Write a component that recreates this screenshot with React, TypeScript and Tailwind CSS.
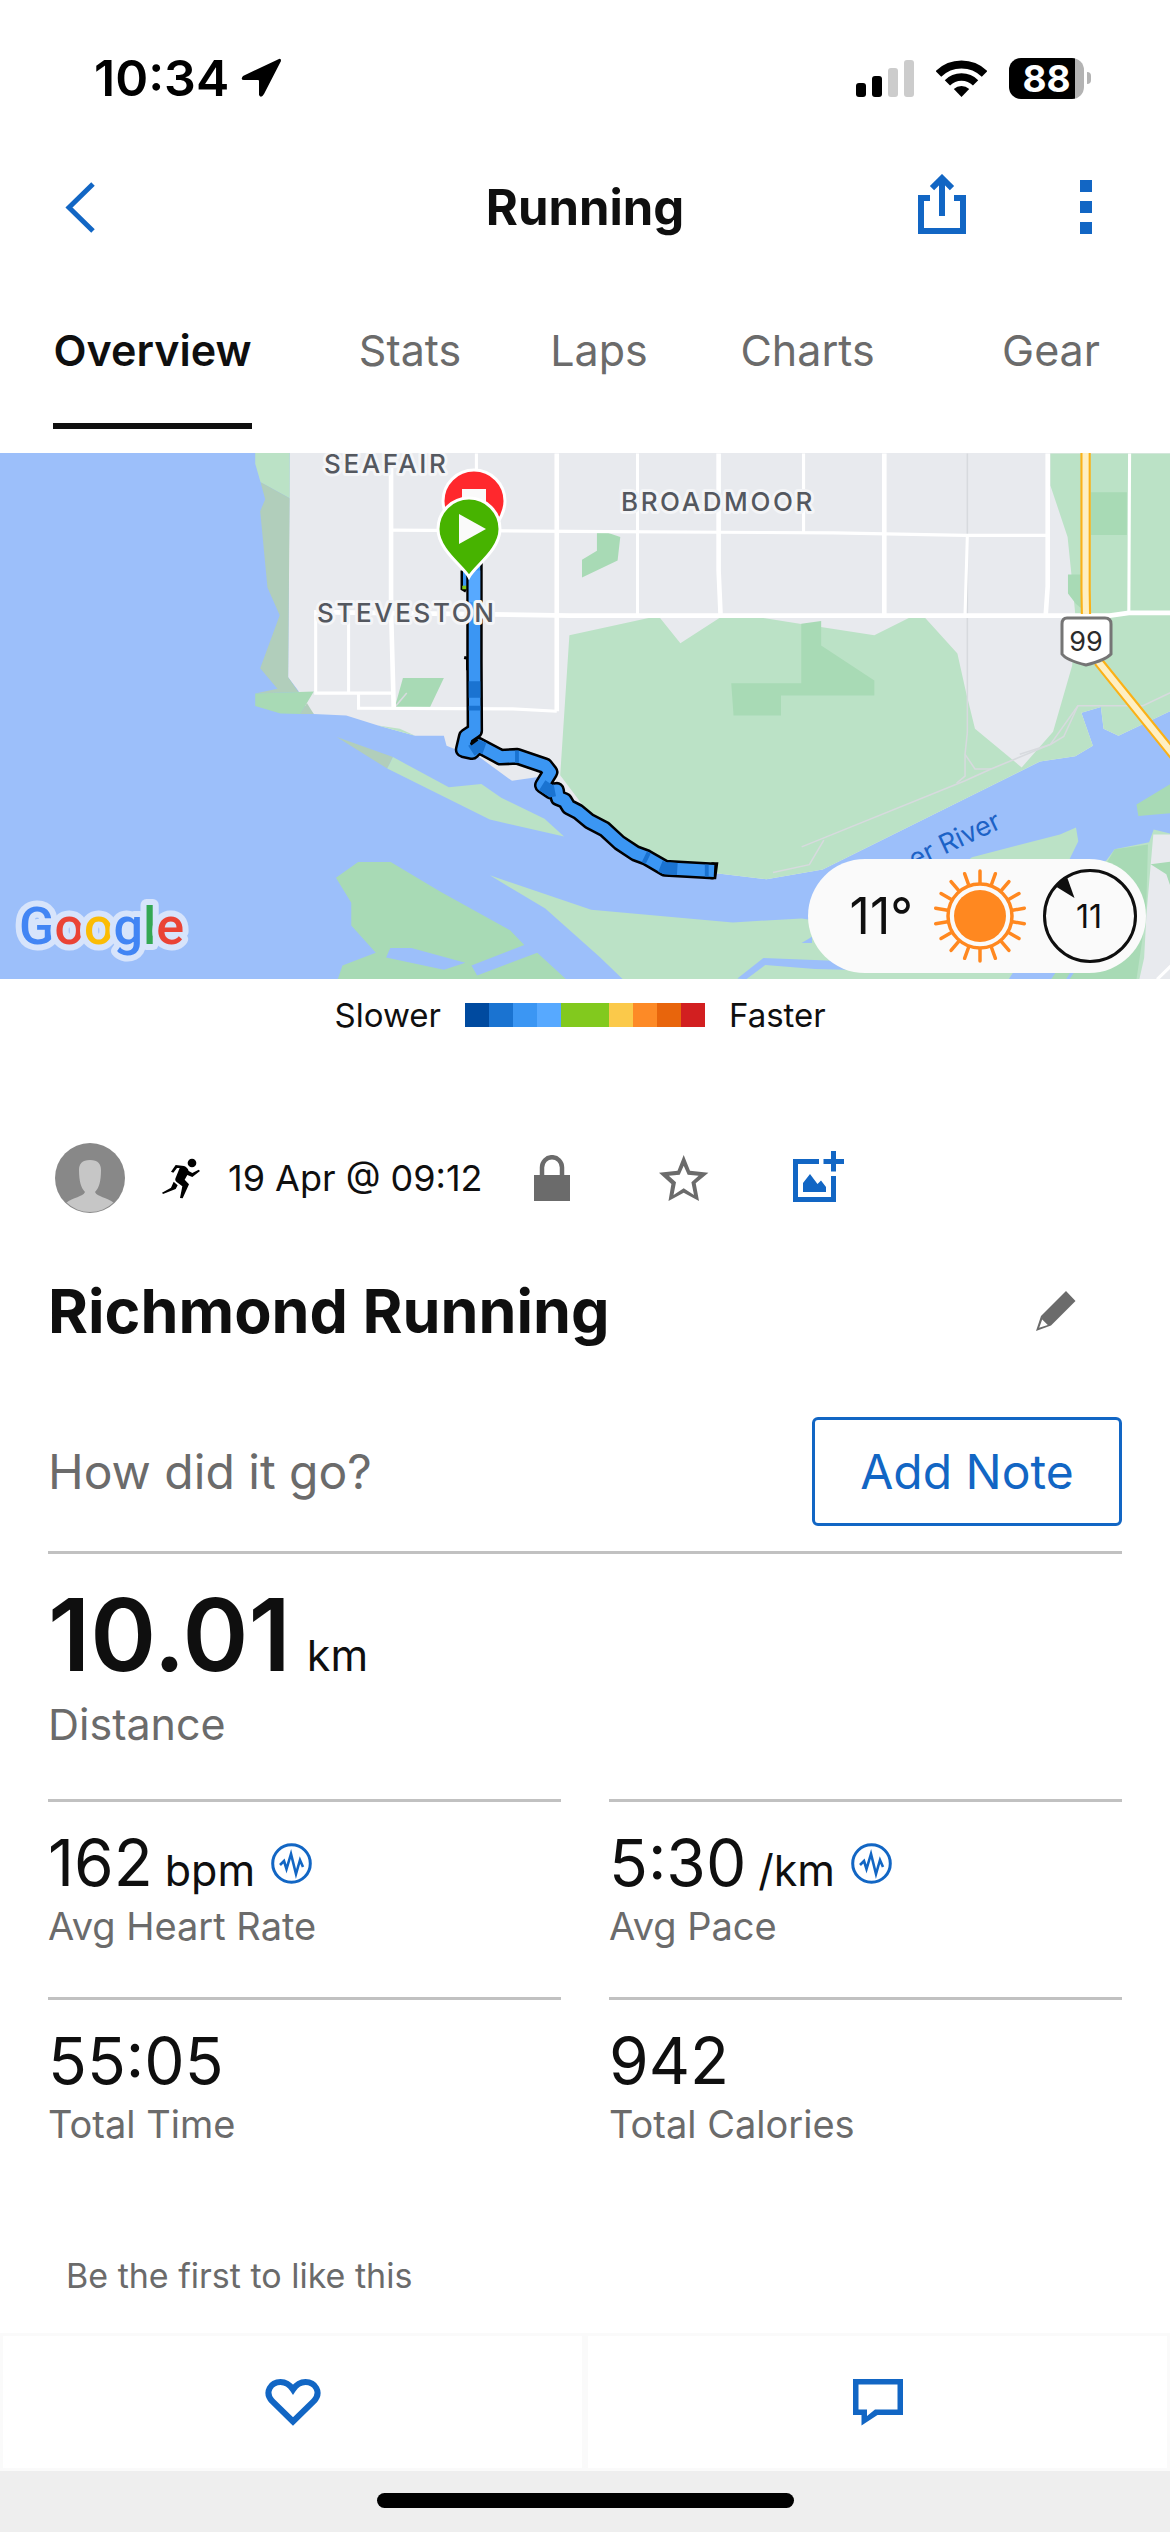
import React from "react";

type Stat = {
  value: string;
  unit?: string;
  label: string;
};

const tabs = ["Overview", "Stats", "Laps", "Charts", "Gear"];

const stats: Stat[] = [
  { value: "162", unit: "bpm", label: "Avg Heart Rate" },
  { value: "5:30", unit: "/km", label: "Avg Pace" },
  { value: "55:05", label: "Total Time" },
  { value: "942", label: "Total Calories" },
];

const paceColors = [
  "bg-[#004a9f]",
  "bg-[#1a73d1]",
  "bg-[#3b96f3]",
  "bg-[#57a9ff]",
  "bg-[#82c91e]",
  "bg-[#82c91e]",
  "bg-[#fbc94a]",
  "bg-[#fd8a26]",
  "bg-[#e8650c]",
  "bg-[#d21f20]",
];

const routePath =
  "M1240 310 V560 L1241 735 L1218 750 L1210 783 L1234 788 L1250 772 L1308 802 L1352 800 L1425 824 L1438 840 L1417 873 L1440 888 L1455 886 L1458 905 L1476 912 L1486 928 L1510 940 L1540 964 L1580 984 L1618 1018 L1660 1045 L1690 1056 L1738 1083 L1866 1090";

const StatusBar = () => (
  <div className="flex h-[156px] items-center justify-between pr-[79px] pl-[94px]">
    <div className="flex items-center gap-3">
      <span className="text-[50px] leading-none font-semibold text-black">10:34</span>
      <svg width="41" height="40" viewBox="0 0 41 40">
        <path d="M38 1 L2 18 Q-1 22 3 22 H17 Q18 22 18 23 V37 Q20 41 23 36 L40 3 Q40 0 38 1Z" />
      </svg>
    </div>
    <div className="flex items-center gap-[22px]">
      <svg width="58" height="37" viewBox="0 0 58 37">
        <rect x="0" y="23" width="10" height="14" rx="3" />
        <rect x="16" y="16" width="10" height="21" rx="3" />
        <rect x="32" y="8" width="10" height="29" rx="3" fill="#cccccc" />
        <rect x="48" y="0" width="10" height="37" rx="3" fill="#cccccc" />
      </svg>
      <svg width="51" height="37" viewBox="0 0 51 37">
        <path d="M2.4 13.9 A33 33 0 0 1 48.6 13.9" fill="none" stroke="#000" strokeWidth="8" />
        <path d="M11.4 22.9 A20 20 0 0 1 39.6 22.9" fill="none" stroke="#000" strokeWidth="7.5" />
        <path d="M25.5 37 L17.8 29 A11.5 11.5 0 0 1 33.2 29Z" />
      </svg>
      <div className="flex items-center gap-[3px]">
        <div className="flex h-[41px] w-[75px] items-center justify-center rounded-[12px] bg-linear-to-r from-black from-88% to-[#b3b3b3] to-88%">
          <span className="text-[37px] leading-none font-bold text-white">88</span>
        </div>
        <div className="h-3 w-1 rounded-r-full bg-[#b3b3b3]" />
      </div>
    </div>
  </div>
);

const Header = () => (
  <header className="grid h-[102px] grid-cols-3 items-center px-16">
    <button aria-label="Back" className="justify-self-start">
      <svg width="32" height="51" viewBox="0 0 32 51" fill="none" stroke="#1266c4" strokeWidth="5">
        <path d="M29 2 L5 25.5 L29 49" />
      </svg>
    </button>
    <h1 className="text-center text-[49px] leading-none font-bold">Running</h1>
    <div className="flex items-center justify-end gap-[114px] pr-3.5">
      <button aria-label="Share" className="pb-1.5">
        <svg width="48" height="60" viewBox="0 0 48 60" fill="none" stroke="#1266c4" strokeWidth="6">
          <path d="M24 42 V5 M14 14.2 L24 4.2 L34 14.2" />
          <path d="M12 24 H3 V57 H45 V24 H36" />
        </svg>
      </button>
      <button aria-label="More options" className="flex flex-col gap-[9px]">
        <span className="size-3 bg-[#1266c4]" />
        <span className="size-3 bg-[#1266c4]" />
        <span className="size-3 bg-[#1266c4]" />
      </button>
    </div>
  </header>
);

const Tabs = () => (
  <nav className="mb-6 grid grid-cols-[305fr_210fr_168fr_249fr_238fr] justify-items-center">
    {tabs.map((tab, index) => (
      <button
        key={tab}
        className={
          index === 0
            ? "h-[171px] border-b-6 border-[#0f0f0f] pt-5 text-[43px] font-semibold"
            : "h-[171px] border-b-6 border-transparent pt-5 text-[43px] text-[#6b6b6b]"
        }
      >
        {tab}
      </button>
    ))}
  </nav>
);

const Weather = () => (
  <div className="absolute right-6 bottom-1.5 flex h-[114px] items-center rounded-full bg-[#fafafa] pr-[9px] pl-[42px]">
    <span className="text-[50px] leading-none">11°</span>
    <svg className="ml-5" width="94" height="94" viewBox="-47 -47 94 94">
      <circle r="26" fill="#ff8820" />
      <g stroke="#ff8820" strokeWidth="3.5" strokeLinecap="round" fill="none">
        <circle r="32" />
        {Array.from({ length: 18 }, (_, i) => (
          <path key={i} d="M0 -33 V-45" transform={`rotate(${i * 20})`} />
        ))}
      </g>
    </svg>
    <svg className="ml-4" width="94" height="94" viewBox="-47 -47 94 94">
      <circle r="45.5" fill="none" stroke="#0f0f0f" strokeWidth="3" />
      <path d="M-35 -30 Q-30 -36 -23 -39 L-15.5 -18Z" fill="#0f0f0f" />
      <text x="-1" y="12" fontSize="32" textAnchor="middle" fill="#0f0f0f">
        11
      </text>
    </svg>
  </div>
);

const RouteMap = () => (
  <section aria-label="Route map" className="relative">
    <svg className="block h-[526px] w-full bg-[#9cbffa]" viewBox="0 0 1170 526" preserveAspectRatio="xMidYMid slice">
      <g transform="translate(0 -13) scale(0.38265 0.39541)">
        {/* Land */}
        <path
          fill="#e8eaee"
          d="M757 30 H3070 V680 L2923 748 L2884 730 L2877 675 L2826 690 L2856 773 L2810 800 L2718 813 L2150 1086 L2003 1111 L1866 1095 L1738 1083 L1660 1045 L1580 984 L1482 922 L1425 850 L1338 862 L1250 800 L1190 782 L1167 773 L1160 748 H1085 L988 722 L905 697 L820 693 L790 665 L780 635 L753 600Z"
        />
        {/* West shoreline */}
        <path fill="#bbe2c6" d="M667 30 H757 V147 L681 107 L667 60Z M988 722 L1045 730 L1085 748Z" />
        <path
          fill="#b1cebb"
          d="M681 107 L757 147 L753 600 L780 637 L667 641 L725 629 L680 577 L731 443 L699 373 L680 180 L693 150Z M880 751 L1027 802 L1012 831Z"
        />
        <path fill="#a8dab5" d="M667 641 L820 636 L802 665 L785 693 L733 692 L667 673Z" />
        <path fill="#b1cebb" d="M802 665 L820 693 H785Z" />
        {/* Islands and south bank */}
        <path fill="#bbe2c6" d="M1027 802 L1173 878 L1258 870 L1310 905 L1423 958 L1474 1003 L1280 960 L1012 831Z" />
        <path
          fill="#a8dab5"
          d="M936 1067 H1021 L1150 1142 L1333 1240 L1370 1277 L1232 1329 L1247 1354 L1404 1297 L1482 1366 H882 L895 1329 L982 1297 L918 1228 V1170 L878 1107Z"
        />
        <path fill="#9cbffa" d="M1020 1285 H1075 L1216 1322 L1160 1340 L1009 1309Z" />
        <path
          fill="#bbe2c6"
          d="M1280 1101 L1545 1188 L1915 1220 L2095 1210 L2300 1240 L2540 1055 L2770 998 L2812 980 L2818 1015 L2780 1090 L2890 1065 L2913 1035 L3003 1017 L3015 985 L3070 998 V1366 H1630 L1568 1308 L1425 1185Z"
        />
        <path
          fill="#9cbffa"
          d="M1927 1362 L1995 1310 L2210 1318 V1340 L2130 1338 L2000 1328 L1950 1364Z M2095 1272 L2122 1256 V1272Z M2636 1364 L2652 1340 H2770 L2747 1364Z"
        />
        <path
          fill="#a8dab5"
          d="M2913 1035 L3000 1023 L2995 1200 L2970 1364 H2747 L2770 1330 L2880 1090Z M3070 863 L2970 922 L2975 951 L3070 943Z"
        />
        <path fill="none" stroke="#9cbffa" strokeWidth="8" d="M2790 1364 L2804 1344" />
        <path fill="#e8eaee" d="M3014 998 H3070 V1366 H2977 L2990 1310 L2996 1200Z" />
        <path fill="#a8dab5" d="M3007 1073 L3070 1065 V1160 L3048 1098Z" />
        {/* Farmland */}
        <path
          fill="#bbe2c6"
          d="M1488 494 L1695 450 H1725 L1778 514 L1880 450 H1995 L2090 465 L2285 494 L2375 450 H2418 L2502 540 L2525 640 L2548 730 L2670 828 L2752 738 L2802 570 L2810 440 L2800 340 L2790 245 L2745 115 V34 H3070 V680 L2923 748 L2884 730 L2877 675 L2826 690 L2856 773 L2810 800 L2718 813 L2150 1086 L2003 1111 L1866 1095 L1738 1083 L1660 1045 L1580 984 L1520 920 L1464 848Z"
        />
        <path
          fill="#a8dab5"
          d="M2094 465 L2146 458 V520 L2285 608 V646 H2041 V697 H1917 L1911 615 H2094Z M1560 235 H1590 L1621 245 L1614 305 L1521 348 V303 L1560 280Z M1053 602 H1160 L1124 675 H1032Z M2851 132 H2945 V240 H2851Z M2791 340 H2825 V425 L2812 415 L2791 388Z"
        />
        {/* Minor roads */}
        <g fill="none" stroke="#d7dade" strokeWidth="4">
          <path d="M2528 34 V740 L2522 795 V850 L2500 868" />
          <path d="M2095 1029 L2522 862 L2590 832 L2745 770 L2817 672 H2987 L3070 634" />
          <path d="M2020 1094 L2115 1074 L2153 1012 M2522 795 L2548 832 H2590 M2665 795 L2745 770 L2780 750 L2817 672 M1034 673 L1063 640" />
        </g>
        {/* Streets */}
        <g fill="none" stroke="#ffffff" strokeWidth="8">
          <path d="M1245 34 V150 M825 430 V640 H1030 M911 440 V640 M937 640 V678 L1340 680 L1455 686" />
          <path d="M1666 34 V440 M2100 34 V232 M2528 243 L2522 440 M2952 34 L2950 437" />
          <path d="M1022 228 L1490 231 L2180 235 L2520 241 H2738" />
          <path d="M3024 1364 L3060 1330" />
        </g>
        <g fill="none" stroke="#ffffff" strokeWidth="12">
          <path d="M1022 34 V430 L1029 680 M1455 34 V686 M1878 34 V330 L1883 440 M2311 34 V440 M2738 34 V370 L2733 440" />
          <path d="M825 435 L1490 444 H2900 L2950 437 H3070" />
        </g>
        {/* Highway 99 */}
        <path fill="none" stroke="#fbb117" strokeWidth="27" d="M2837 30 V380 L2838 440 M2870 560 L2920 620 L3070 800" />
        <path fill="none" stroke="#feefc3" strokeWidth="16" d="M2837 30 V380 L2838 440 M2870 560 L2920 620 L3070 800" />
        {/* Recorded track */}
        <path d="M1208 330 V376 L1218 382" fill="none" stroke="#000" strokeWidth="9" />
        <path d="M1220 330 V374" fill="none" stroke="#3b96f3" strokeWidth="20" />
        <path d="M1208 373 H1226" stroke="#82c91e" strokeWidth="9" />
        <path d="M1213 550 L1222 552 V582" fill="none" stroke="#000" strokeWidth="8" />
        <path d={routePath} fill="none" stroke="#000" strokeWidth="43" strokeLinejoin="round" />
        <path d="M1862 1071 H1874 L1869 1108 L1860 1108Z" stroke="#000" strokeWidth="6" />
        <path d={routePath} fill="none" stroke="#3b96f3" strokeWidth="30" strokeLinejoin="round" />
        <g fill="none" stroke="#1a73d1" strokeWidth="30">
          <path d="M1240 610 V652 M1240 672 V684 M1232 786 L1250 774 L1266 780 M1346 801 L1356 801" />
          <path d="M1417 873 L1440 888 L1450 886 M1684 1054 L1694 1059 M1726 1078 L1738 1083 L1770 1085 M1842 1089 L1852 1089" />
        </g>
        <path d="M1240 330 V410" stroke="#57a9ff" strokeWidth="30" />
        <path d="M1230 770 L1248 757" stroke="#000" strokeWidth="7" />
      </g>

      {/* Labels */}
      <g
        className="tracking-widest"
        fontSize="26"
        fontWeight="500"
        fill="#54585f"
        stroke="#f4f5f7"
        strokeWidth="6"
        strokeLinejoin="round"
        paintOrder="stroke"
      >
        <text x="324" y="20">SEAFAIR</text>
        <text x="317" y="169">STEVESTON</text>
        <text x="621" y="58">BROADMOOR</text>
      </g>
      <text x="914" y="416" fontSize="27" fill="#1c62c6" transform="rotate(-25 914 416)">
        er River
      </text>
      <path
        d="M1067 165 H1105 Q1111 165 1111 171 V201 Q1106 207 1086 212 Q1066 207 1062 201 V171 Q1062 165 1067 165Z"
        fill="#fff"
        stroke="#757575"
        strokeWidth="3"
      />
      <text x="1086" y="198" fontSize="27" textAnchor="middle" fill="#2b2b2b">
        99
      </text>

      {/* Stop and start pins */}
      <g stroke="#fff" strokeWidth="3">
        <path d="M474 98 C468 88 443 70 443 48 A31 31 0 0 1 505 48 C505 70 480 88 474 98Z" fill="#ff282d" />
        <path d="M462 36 H486 V60 H462Z" fill="#fafafa" stroke="none" />
        <path d="M469 124 C463 113 438 97 438 76 A31 31 0 0 1 500 76 C500 97 475 113 469 124Z" fill="#47b300" />
        <path d="M459 61 L486 76 L459 91Z" fill="#fafafa" stroke="none" />
      </g>

      <text
        x="19"
        y="491"
        fontSize="52"
        fontWeight="500"
        stroke="#d7e4fb"
        strokeWidth="12"
        strokeLinejoin="round"
        paintOrder="stroke"
        className="font-['Roboto',sans-serif]"
      >
        <tspan fill="#4285f4">G</tspan>
        <tspan fill="#ea4335">o</tspan>
        <tspan fill="#fbbc04">o</tspan>
        <tspan fill="#4285f4">g</tspan>
        <tspan fill="#34a853">l</tspan>
        <tspan fill="#ea4335">e</tspan>
      </text>
    </svg>
    <Weather />
  </section>
);

const PaceLegend = () => (
  <div className="grid h-[72px] grid-cols-[1fr_auto_1fr] items-center gap-6 text-[33px] leading-none">
    <span className="text-right">Slower</span>
    <div className="flex">
      {paceColors.map((color, index) => (
        <span key={index} className={`size-6 ${color}`} />
      ))}
    </div>
    <span>Faster</span>
  </div>
);

const ActivityMeta = () => (
  <div className="mt-[92px] flex h-[70px] items-center pl-[7px]">
    <svg width="70" height="70" viewBox="0 0 70 70">
      <clipPath id="avatar">
        <circle cx="35" cy="35" r="34" />
      </clipPath>
      <circle cx="35" cy="35" r="35" fill="#888888" />
      <path
        clipPath="url(#avatar)"
        fill="#c6c6c6"
        d="M35 17 C43 17 46 21 46 27 C46 38 44 45 40 49 C42 54 52 54 59 60 L50 70 H20 L11 60 C18 54 28 54 30 49 C26 45 24 38 24 27 C24 21 27 17 35 17Z"
      />
    </svg>
    <svg className="ml-[37px]" width="38" height="41" viewBox="366 82 114 123">
      <circle cx="456" cy="97" r="13" />
      <path d="M407 103 L432 106 Q443 110 446 121 L457 127 L476 117 L480 121 L457 139 L442 133 L434 147 L447 161 L428 203 L420 202 L427 167 L409 153 Q403 149 408 139 L419 112 L411 112 L400 126 L393 123Z" />
      <path d="M401 153 L413 164 L407 175 L369 190 L366 186 L393 171Z" />
    </svg>
    <time className="ml-7 w-64 text-[36px] leading-none whitespace-nowrap">19 Apr @ 09:12</time>
    <button aria-label="Privacy" className="ml-[50px]">
      <svg width="36" height="46" viewBox="0 0 36 46" fill="#6b6b6b">
        <rect y="20" width="36" height="26" />
        <path d="M8 21 V12.5 A10 10.3 0 0 1 28 12.5 V21" fill="none" stroke="#6b6b6b" strokeWidth="4.5" />
      </svg>
    </button>
    <button aria-label="Favourite" className="ml-[89px]">
      <svg width="50" height="46" viewBox="0 0 50 46" fill="#6b6b6b" fillRule="evenodd">
        <path d="M24.7 0 L31 15.7 L49.4 17.7 L36.7 28.3 L40 46 L24.7 37.7 L9.5 46 L12.4 29 L0 17.7 L18.5 15.7Z M24.7 10.7 L20.7 19.7 L9.8 20.7 L17 27.3 L14.5 40 L24.7 33.3 L35 40 L32.4 27.3 L39.6 20.7 L28.7 19.7Z" />
      </svg>
    </button>
    <button aria-label="Add photo" className="ml-[84px] pb-1">
      <svg width="51" height="51" viewBox="0 0 51 51" fill="none" stroke="#1266c4" strokeWidth="5">
        <path d="M26 10.5 H2.5 V48.5 H40.5 V25 M40.5 0 V20.5 M30.5 10.5 H51" />
        <path d="M10 32 L17 23 L24.5 33 L28 29.5 L33 36 V41 H10Z" fill="#1266c4" stroke="none" />
      </svg>
    </button>
  </div>
);

const PulseIcon = () => (
  <svg width="41" height="41" viewBox="0 0 41 41" fill="none" stroke="#1266c4" strokeWidth="3">
    <circle cx="20.5" cy="20.5" r="18.8" />
    <path d="M9 22 L13 18 L15.5 26 L20 11 L25 31 L29 17 L32 24" strokeWidth="2.6" />
  </svg>
);

const StatCell = ({ stat }: { stat: Stat }) => (
  <div className="flex flex-col-reverse border-t-3 border-[#c1c1c1] pt-[29px] pb-[49px]">
    <dt className="mt-[9px] text-[38px] leading-11 text-[#6b6b6b]">{stat.label}</dt>
    <dd className="flex items-baseline text-[64px] leading-16">
      {stat.value}
      {stat.unit && (
        <>
          <span className="ml-3 text-[43px] leading-none">{stat.unit}</span>
          <button aria-label={`${stat.label} chart`} className="ml-4 self-center">
            <PulseIcon />
          </button>
        </>
      )}
    </dd>
  </div>
);

const Summary = () => (
  <main className="px-12">
    <ActivityMeta />

    <div className="mt-[58px] flex h-20 items-center justify-between pr-[46px]">
      <h2 className="text-[61px] leading-none font-bold">Richmond Running</h2>
      <button aria-label="Edit name">
        <svg width="40" height="40" viewBox="0 0 40 40" fill="#6b6b6b" fillRule="evenodd">
          <path d="M30 0 L39.5 10 L15 34.5 L0 40 L5 25Z M6.2 28.5 L3.2 36.8 L11.8 34Z" />
        </svg>
      </button>
    </div>

    <div className="mt-[66px] flex items-center justify-between border-b-3 border-[#c1c1c1] pb-[25px] text-[48px] leading-none">
      <p className="text-[#6b6b6b]">How did it go?</p>
      <button className="h-[109px] w-[310px] rounded-md border-3 border-[#1266c4] text-[#1266c4]">Add Note</button>
    </div>

    <dl>
      <div className="mt-[31px] mb-[51px] flex flex-col-reverse">
        <dt className="mt-[15px] text-[43px] leading-12 text-[#6b6b6b]">Distance</dt>
        <dd className="flex items-baseline text-[100px] leading-none font-semibold">
          10.01
          <span className="ml-4 text-[43px] leading-none font-normal">km</span>
        </dd>
      </div>
      <div className="grid grid-cols-2 gap-x-12">
        {stats.map((stat) => (
          <StatCell key={stat.label} stat={stat} />
        ))}
      </div>
    </dl>

    <p className="mt-[61px] mb-[37px] pl-[18px] text-[34px] leading-10 text-[#6b6b6b]">Be the first to like this</p>
  </main>
);

const ActionBar = () => (
  <footer className="mt-auto">
    <div className="grid h-[138px] grid-cols-2">
      <button aria-label="Like" className="flex items-center justify-center border-3 border-[#fafafa]">
        <svg width="56" height="47" viewBox="0 0 56 47" fill="none" stroke="#1266c4" strokeWidth="6">
          <path d="M28 42.5 L7 22 C-1 13 6 3 15.5 3 C21 3 25 6 28 10.5 C31 6 35 3 40.5 3 C50 3 57 13 49 22Z" />
        </svg>
      </button>
      <button aria-label="Comment" className="flex items-center justify-center border-3 border-[#fafafa]">
        <svg width="50" height="47" viewBox="0 0 50 47" fill="#1266c4" fillRule="evenodd">
          <path d="M0 0 H50 V36 H24.5 L8.5 46.5 V36 H0Z M5.5 5.5 V30.5 H14 V37 L22 30.5 H44.5 V5.5Z" />
        </svg>
      </button>
    </div>
    <div className="flex h-[61px] justify-center bg-[#eeeeee] pt-[22px]">
      <div className="h-[15px] w-[417px] rounded-full bg-black" />
    </div>
  </footer>
);

const App: React.FC = () => {
  return (
    <div className="flex min-h-screen flex-col bg-white font-['Inter',sans-serif] text-[#0f0f0f]">
      <StatusBar />
      <Header />
      <Tabs />
      <RouteMap />
      <PaceLegend />
      <Summary />
      <ActionBar />
    </div>
  );
};

export default App;
